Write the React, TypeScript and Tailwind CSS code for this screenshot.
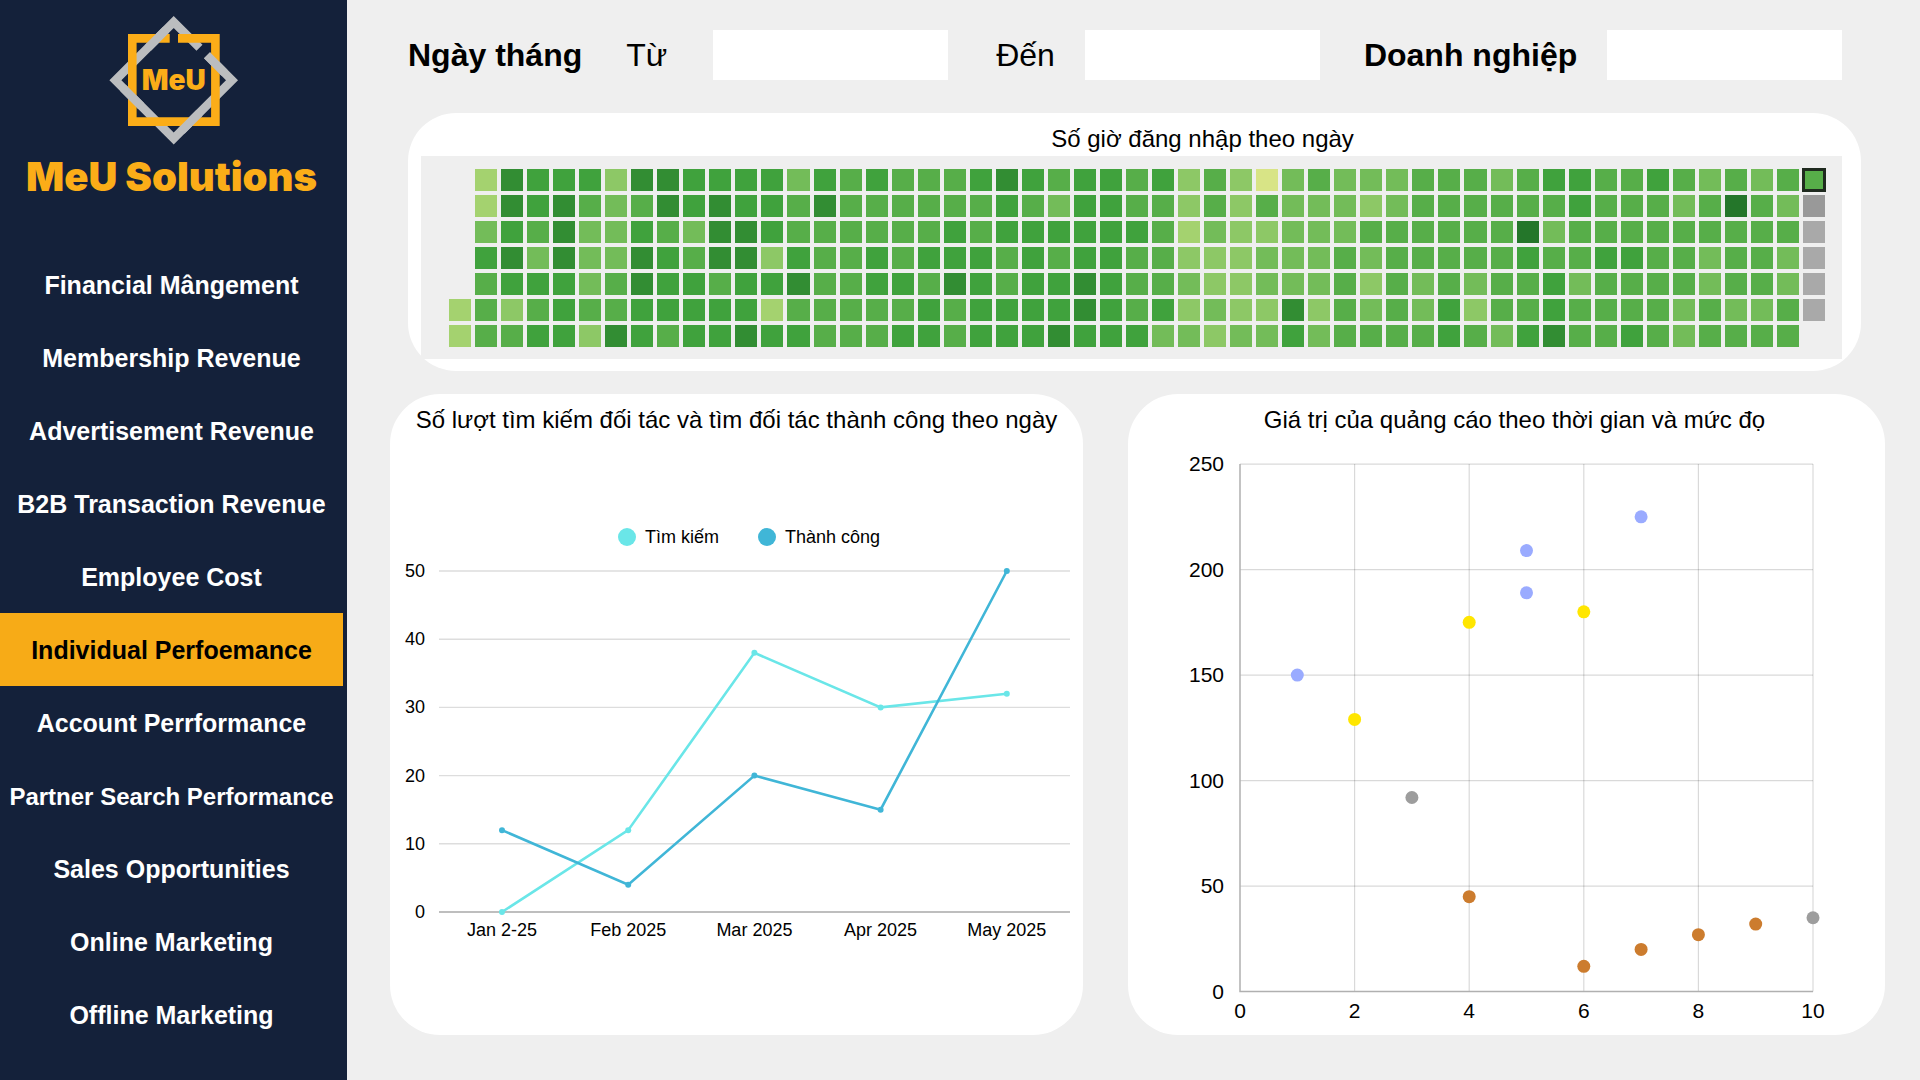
import React from "react";

const NAV = [
  "Financial Mângement",
  "Membership Revenue",
  "Advertisement Revenue",
  "B2B Transaction Revenue",
  "Employee Cost",
  "Individual Perfoemance",
  "Account Perrformance",
  "Partner Search Performance",
  "Sales Opportunities",
  "Online Marketing",
  "Offline Marketing",
];
const ACTIVE = "Individual Perfoemance";

/* One string per weekday, one letter per week; "-" marks a day outside the range. */
const HEAT = [
  "-afeeebffeeeecede" + "dddefedeedebdbycdcc" + "cdddcdeeddedcdcdS",
  "-afefdcdfefeedfdd" + "ddddedceeddbdbdcccb" + "cddddddedddcdgdcX",
  "-cedfccedcffedddd" + "ddedeeeeeedacbbcccd" + "dddddgcdddddddddx",
  "-efcfccfedffbedde" + "deeededeeddbbbcccdc" + "dddddeddeeddcddcx",
  "-deeecdfeedeefdde" + "edfedeefeddcbbcccdb" + "dcdcddecddddcddcx",
  "adbdeddeeeeeadddd" + "dedeeeefedebcbbfbdc" + "dcebddeddddcdccdx",
  "addeebfedeefeeddd" + "eedeeefeeeccbccecdd" + "ddedcefddedcdddd-",
];

const CELL: Record<string, string> = {
  "-": "",
  y: "bg-[#d8e486]",
  a: "bg-[#a4d26f]",
  b: "bg-[#8dc866]",
  c: "bg-[#73bc59]",
  d: "bg-[#57ae49]",
  e: "bg-[#40a23d]",
  f: "bg-[#328d33]",
  g: "bg-[#24762a]",
  x: "bg-[#a9a9a9]",
  X: "bg-[#999999]",
  S: "bg-[#57ae49] outline-3 outline-[#1f2a1f] -outline-offset-2",
};

function Logo() {
  return (
    <svg width="130" height="130" viewBox="109 15 130 130" fill="none" role="img" aria-label="MeU">
      <path d="M207 55.3 L232 80.3 L173.7 138.6 L115.4 80.3 L173.7 22 L199.5 47.8" stroke="#bbbdbf" strokeWidth="8.5" />
      <path d="M178 38.4 H215.4 V121.6 H132.3 V38.4 H169.7" stroke="#fbad18" strokeWidth="8.6" />
      <path
        d="M148.3 47.4 L166.3 29.4 M123.3 88.2 L141.3 106.2 M181.6 130.7 L199.6 112.7 M207 55.3 L224.4 72.7"
        stroke="#bbbdbf"
        strokeWidth="8.5"
      />
      <text x="173.7" y="90" textAnchor="middle" fill="#fbad18" className="font-[Inter] text-[28px] font-black">
        MeU
      </text>
    </svg>
  );
}

function Sidebar() {
  return (
    <aside className="flex w-[347px] shrink-0 flex-col bg-[#14213a]">
      <div className="flex h-[248px] flex-col items-center pt-[15px]">
        <Logo />
        <div className="mt-2 pr-1 font-[Inter] text-[40px] leading-12 font-black whitespace-nowrap text-[#fbad18]">MeU Solutions</div>
      </div>
      <nav className="mr-1 flex flex-col">
        {NAV.map((label) => (
          <a
            key={label}
            href="#"
            aria-current={label === ACTIVE ? "page" : undefined}
            className={
              "flex h-[73px] items-center justify-center pt-0.5 font-bold whitespace-nowrap " +
              (label.length > 24 ? "text-2xl " : "text-[25px] ") +
              (label === ACTIVE ? "bg-[#f7ab17] text-black" : "text-white")
            }
          >
            {label}
          </a>
        ))}
      </nav>
    </aside>
  );
}

const INPUT = "h-[50px] w-[235px] bg-white px-3 text-2xl outline-none";

function Filters() {
  return (
    <form className="flex items-center pr-[43px] pl-[18px] text-[32px] leading-[50px] whitespace-nowrap">
      <span className="mr-11 font-bold">Ngày tháng</span>
      <label htmlFor="from" className="mr-[46px]">Từ</label>
      <input id="from" type="text" className={INPUT} />
      <label htmlFor="to" className="mr-[30px] ml-12">Đến</label>
      <input id="to" type="text" className={INPUT} />
      <label htmlFor="company" className="ml-11 font-bold">Doanh nghiệp</label>
      <input id="company" type="text" className={INPUT + " ml-auto"} />
    </form>
  );
}

function Heatmap() {
  return (
    <section className="mr-6 ml-[18px] rounded-[48px] bg-white pt-[9px] pr-[19px] pb-3 pl-[13px]">
      <h2 className="pl-[142px] text-center text-2xl leading-[34px]">Số giờ đăng nhập theo ngày</h2>
      <div className="grid grid-cols-[repeat(53,minmax(0,1fr))] gap-1 bg-[#efefef] pt-[13px] pr-[17px] pb-3 pl-7">
        {HEAT.flatMap((row, r) =>
          [...row].map((level, c) => <div key={`${r}-${c}`} className={"h-[22px] " + CELL[level]} />)
        )}
      </div>
    </section>
  );
}

const MONTHS = ["Jan 2-25", "Feb 2025", "Mar 2025", "Apr 2025", "May 2025"];
const SERIES = [
  { name: "Tìm kiếm", color: "#6ae6e8", values: [0, 12, 38, 30, 32], legendX: 237 },
  { name: "Thành công", color: "#40b6d7", values: [12, 4, 20, 15, 50], legendX: 377 },
];

function LineChart() {
  const px = (i: number) => 112 + i * 126.2;
  const py = (v: number) => 398 - v * 6.82;
  return (
    <svg viewBox="0 0 693 440" className="mt-[77px] block h-auto w-full text-[18px]" fill="black">
      {SERIES.map((s) => (
        <g key={s.name}>
          <circle cx={s.legendX} cy="23" r="9" fill={s.color} />
          <text x={s.legendX + 18} y="29">{s.name}</text>
        </g>
      ))}
      {[0, 10, 20, 30, 40, 50].map((v) => (
        <g key={v}>
          <path d={`M49 ${py(v)} H680`} stroke={v === 0 ? "#a8a8a8" : "#dddddd"} strokeWidth="1.4" />
          <text x="35" y={py(v) + 6} textAnchor="end">{v}</text>
        </g>
      ))}
      {MONTHS.map((m, i) => (
        <text key={m} x={px(i)} y="422" textAnchor="middle">{m}</text>
      ))}
      {SERIES.map((s) => (
        <g key={s.name}>
          <polyline points={s.values.map((v, i) => `${px(i)},${py(v)}`).join(" ")} fill="none" stroke={s.color} strokeWidth="2.6" />
          {s.values.map((v, i) => (
            <circle key={i} cx={px(i)} cy={py(v)} r="3" fill={s.color} />
          ))}
        </g>
      ))}
    </svg>
  );
}

const DOTS = [
  { color: "#9aabff", points: [[1, 150], [5, 209], [5, 189], [7, 225]] },
  { color: "#ffe600", points: [[2, 129], [4, 175], [6, 180]] },
  { color: "#9d9d9d", points: [[3, 92], [10, 35]] },
  { color: "#cc7c2e", points: [[4, 45], [6, 12], [7, 20], [8, 27], [9, 32]] },
];

function ScatterChart() {
  const px = (v: number) => 112 + v * 57.3;
  const py = (v: number) => 551.6 - v * 2.11;
  return (
    <svg viewBox="0 0 757 590" className="mt-[3px] block h-auto w-full text-[21px]" fill="black">
      {[50, 100, 150, 200, 250].map((v) => (
        <path key={v} d={`M112 ${py(v)} H685`} stroke="black" strokeOpacity="0.15" strokeWidth="1.2" />
      ))}
      {[2, 4, 6, 8, 10].map((v) => (
        <path key={v} d={`M${px(v)} 24 V551.6`} stroke="black" strokeOpacity="0.15" strokeWidth="1.2" />
      ))}
      <path d="M112 24 V551.6 H685" fill="none" stroke="#b0b0b0" strokeWidth="1.5" />
      {[0, 50, 100, 150, 200, 250].map((v) => (
        <text key={v} x="96" y={py(v) + 7} textAnchor="end">{v}</text>
      ))}
      {[0, 2, 4, 6, 8, 10].map((v) => (
        <text key={v} x={px(v)} y="578" textAnchor="middle">{v}</text>
      ))}
      {DOTS.map((d) =>
        d.points.map(([x, y]) => <circle key={`${x}-${y}`} cx={px(x)} cy={py(y)} r="6.5" fill={d.color} />)
      )}
    </svg>
  );
}

export default function App() {
  return (
    <div className="flex min-h-screen bg-[#efefef] font-['Liberation_Sans',Arial,sans-serif] text-black">
      <Sidebar />
      <main className="flex min-w-0 flex-1 flex-col pt-[30px] pr-[35px] pb-[45px] pl-[43px]">
        <Filters />
        <div className="mt-[33px]">
          <Heatmap />
        </div>
        <div className="mt-[23px] grid flex-1 grid-cols-[693fr_757fr] gap-[45px]">
          <section className="rounded-[50px] bg-white pt-[9px]">
            <h2 className="text-center text-2xl leading-[34px] whitespace-nowrap">
              Số lượt tìm kiếm đối tác và tìm đối tác thành công theo ngày
            </h2>
            <LineChart />
          </section>
          <section className="rounded-[50px] bg-white pt-[9px]">
            <h2 className="pl-4 text-center text-2xl leading-[34px] whitespace-nowrap">
              Giá trị của quảng cáo theo thời gian và mức đọ
            </h2>
            <ScatterChart />
          </section>
        </div>
      </main>
    </div>
  );
}
